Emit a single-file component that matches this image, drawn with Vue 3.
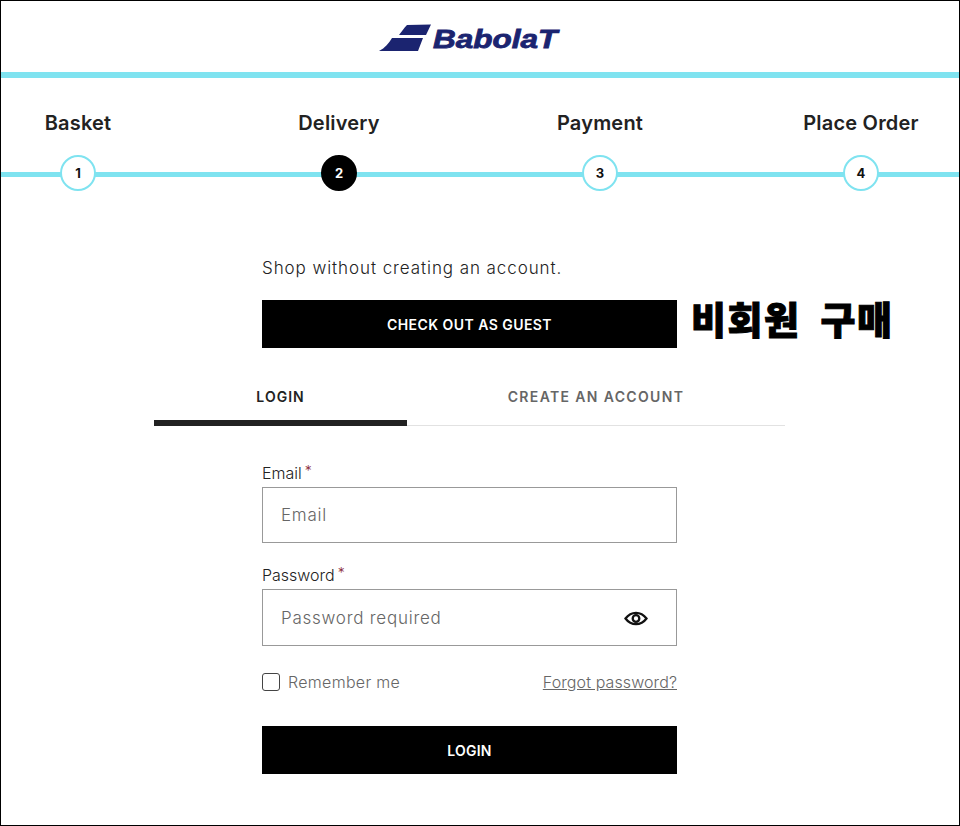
<template>
  <div class="page">
    <header class="logo-bar">
      <svg class="logo-mark" width="54" height="30" viewBox="0 0 54 30">
        <path d="M21 11C24 7 26 4 29 1L53 0.500L48 11Z" fill="#1b2470" />
        <path d="M14 14L45 14L40 27L1 27C7 24 11 19 14 14Z" fill="#1b2470" />
      </svg>
      <span class="logo-text">BabolaT</span>
    </header>
    <div class="cyan-bar"></div>

    <ol class="steps">
      <li v-for="step in steps" :key="step.num" class="step">
        <span class="step-name">{{ step.name }}</span>
        <span class="step-num" :class="{ current: step.num === 2 }">{{ step.num }}</span>
      </li>
    </ol>

    <main class="checkout">
      <div class="column">
        <p class="intro">Shop without creating an account.</p>
        <div class="guest-row">
          <button class="black-btn guest" type="button">CHECK OUT AS GUEST</button>
          <span class="note">비회원 구매</span>
        </div>
      </div>

      <div class="tabs">
        <div class="tab active">LOGIN</div>
        <div class="tab">CREATE AN ACCOUNT</div>
      </div>

      <form class="column login-form" @submit.prevent>
        <label class="field-label">Email<span class="req">*</span></label>
        <div class="input-box">
          <input type="text" placeholder="Email" />
        </div>

        <label class="field-label second">Password<span class="req">*</span></label>
        <div class="input-box tall">
          <input type="password" placeholder="Password required" />
          <svg class="eye" width="24" height="16" viewBox="0 0 24 16" fill="none">
            <path d="M1.5 8.500C4.500 4.500 8 2.800 12 2.800S19.500 4.500 22.500 8.500C19.500 12.500 16 14.200 12 14.200S4.500 12.500 1.500 8.500Z" stroke="#111" stroke-width="2.300" />
            <circle cx="12" cy="8.500" r="3.300" stroke="#111" stroke-width="2.300" />
          </svg>
        </div>

        <div class="options">
          <label class="remember">
            <span class="checkbox"></span>
            Remember me
          </label>
          <a class="forgot" href="#">Forgot password?</a>
        </div>

        <button class="black-btn" type="submit">LOGIN</button>
      </form>
    </main>
  </div>
</template>

<script setup>
const steps = [
  { num: 1, name: "Basket" },
  { num: 2, name: "Delivery" },
  { num: 3, name: "Payment" },
  { num: 4, name: "Place Order" }
];
</script>

<style>
html,
body {
  margin: 0;
  background: #fff;
}
</style>

<style scoped>
.page {
  box-sizing: border-box;
  width: 960px;
  height: 826px;
  border: 1px solid #000;
  overflow: hidden;
  background: #fff;
  color: #222;
  font-family: Inter, "Noto Sans", sans-serif;
}

.logo-bar {
  height: 71px;
  display: flex;
  align-items: center;
  justify-content: center;
  padding-right: 50px;
}

.logo-mark {
  margin-top: 5px;
}

.logo-text {
  margin-left: 1px;
  margin-top: 5px;
  font-family: "Liberation Sans", sans-serif;
  font-size: 25px;
  font-weight: 700;
  font-style: italic;
  color: #1b2470;
  transform: scaleX(1.26);
  transform-origin: left center;
  -webkit-text-stroke: 0.8px #1b2470;
}

.cyan-bar {
  height: 6px;
  background: #7fe3f0;
}

.steps {
  position: relative;
  list-style: none;
  margin: 0;
  padding: 33px 38px 0 17px;
  display: flex;
  justify-content: space-between;
}

.steps::before {
  content: "";
  position: absolute;
  left: 0;
  right: 0;
  bottom: 14px;
  height: 5px;
  background: #7fe3f0;
}

.step {
  position: relative;
  width: 120px;
  display: flex;
  flex-direction: column;
  align-items: center;
}

.step-name {
  font-size: 20px;
  line-height: 24px;
  font-weight: 600;
  letter-spacing: 0.2px;
  white-space: nowrap;
}

.step-num {
  box-sizing: border-box;
  width: 36px;
  height: 36px;
  margin-top: 20px;
  border: 2px solid #7fe3f0;
  border-radius: 50%;
  background: #fff;
  color: #111;
  font-size: 13px;
  font-weight: 700;
  display: flex;
  align-items: center;
  justify-content: center;
}

.step-num.current {
  background: #000;
  border-color: #000;
  color: #fff;
}

.checkout {
  width: 631px;
  margin: 65px 0 0 153px;
}

.column {
  width: 415px;
  margin-left: 108px;
}

.intro {
  margin: 0 0 20px;
  font-size: 17px;
  line-height: 24px;
  font-weight: 300;
  letter-spacing: 0.92px;
}

.guest-row {
  position: relative;
}

.note {
  position: absolute;
  left: 429px;
  top: -11px;
  font-family: "Noto Sans CJK KR", sans-serif;
  font-size: 38px;
  line-height: 58px;
  font-weight: 900;
  letter-spacing: 1.5px;
  word-spacing: 10px;
  color: #000;
  white-space: nowrap;
  -webkit-text-stroke: 1px #000;
}

.black-btn {
  display: block;
  width: 100%;
  height: 48px;
  border: 0;
  padding: 0;
  background: #000;
  color: #fff;
  font-family: inherit;
  font-size: 14px;
  font-weight: 600;
  letter-spacing: 0.2px;
}

.black-btn.guest {
  letter-spacing: 0.45px;
}

.tabs {
  display: flex;
  margin-top: 29px;
  border-bottom: 1px solid #e2e2e2;
}

.tab {
  flex: 1 1 60%;
  height: 43px;
  padding-top: 9px;
  box-sizing: border-box;
  text-align: center;
  font-size: 14px;
  line-height: 22px;
  font-weight: 600;
  letter-spacing: 1.35px;
  color: #666;
}

.tab.active {
  flex: 0 0 253px;
  height: 49px;
  border-bottom: 6px solid #222;
  margin-bottom: -1px;
  letter-spacing: 1px;
  color: #222;
}

.login-form {
  padding-top: 36px;
}

.field-label {
  display: block;
  height: 25px;
  font-size: 16px;
  line-height: 22px;
  font-weight: 300;
}

.field-label.second {
  margin-top: 21px;
}

.req {
  position: relative;
  top: -3px;
  margin-left: 3px;
  color: #8c2b3a;
  font-size: 14px;
}

.input-box {
  box-sizing: border-box;
  height: 56px;
  border: 1px solid #999;
  display: flex;
  align-items: center;
  padding: 0 28px 0 18px;
}

.input-box.tall {
  height: 57px;
}

.input-box input {
  flex: 1;
  min-width: 0;
  border: 0;
  outline: 0;
  padding: 0;
  background: transparent;
  font-family: inherit;
  font-size: 17px;
  font-weight: 300;
  letter-spacing: 0.75px;
}

.input-box input::placeholder {
  color: #666;
  opacity: 1;
}

.options {
  display: flex;
  align-items: center;
  justify-content: space-between;
  margin-top: 24px;
  margin-bottom: 32px;
  height: 24px;
  font-size: 16px;
  font-weight: 300;
  color: #666;
  letter-spacing: 0.3px;
}

.remember {
  display: flex;
  align-items: center;
  gap: 8px;
}

.checkbox {
  box-sizing: border-box;
  width: 18px;
  height: 18px;
  border: 1.5px solid #444;
  border-radius: 3px;
}

.forgot {
  color: #666;
  letter-spacing: 0.1px;
  text-decoration: underline;
}
</style>
